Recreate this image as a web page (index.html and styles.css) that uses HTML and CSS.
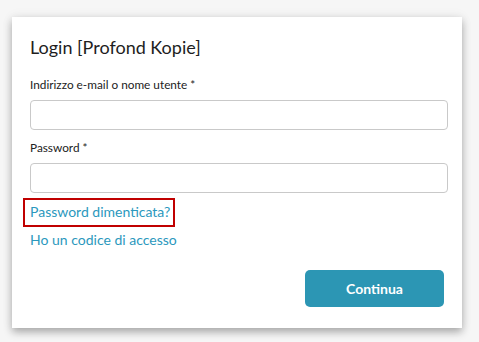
FILE: index.html
```html
<!DOCTYPE html>
<html lang="it">
<head>
<meta charset="utf-8">
<title>Login</title>
<link rel="stylesheet" href="styles.css">
</head>
<body>
<div class="card">
  <h1 class="title">Login [Profond Kopie]</h1>
  <label class="label" for="user">Indirizzo e-mail o nome utente *</label>
  <input class="field" id="user" type="text">
  <label class="label" for="pwd">Password *</label>
  <input class="field" id="pwd" type="password">
  <div class="links">
    <a class="link boxed" href="#">Password dimenticata?</a>
    <a class="link" href="#">Ho un codice di accesso</a>
  </div>
  <div class="actions">
    <button class="btn" type="button">Continua</button>
  </div>
</div>
</body>
</html>
```
FILE: styles.css
```css
html, body {
  margin: 0;
  padding: 0;
}
body {
  background: #f6f6f6;
  font-family: Lato, "Open Sans", sans-serif;
  color: #222;
  padding: 17px 0 0 12px;
  height: 342px;
  box-sizing: border-box;
}
.card {
  width: 450px;
  height: 311px;
  box-sizing: border-box;
  background: #fff;
  box-shadow: 0 4px 8px rgba(0,0,0,0.3), 0 0 12px rgba(0,0,0,0.06);
  padding: 18px 14px 0 18px;
  display: flex;
  flex-direction: column;
}
.title {
  margin: 0;
  font-size: 18px;
  font-weight: 400;
  line-height: 24px;
  color: #1e1e1e;
}
.label {
  display: block;
  font-size: 11.8px;
  line-height: 14px;
  margin-top: 19px;
  color: #222;
}
.label + .field {
  margin-top: 8px;
}
.field {
  display: block;
  width: 418px;
  height: 30px;
  box-sizing: border-box;
  border: 1px solid #c9c9c9;
  border-radius: 4px;
  margin: 0;
  padding: 0 8px;
  font: inherit;
}
.field + .label {
  margin-top: 11px;
}
.links {
  display: flex;
  flex-direction: column;
  align-items: flex-start;
  margin-top: 7px;
}
.link {
  font-size: 14px;
  line-height: 18px;
  color: #2b98bd;
  text-decoration: none;
}
.boxed {
  outline: 2px solid #c00000;
  outline-offset: 0;
  padding: 3px 3px 4px 5px;
  margin-left: -5px;
  line-height: 18px;
}
.boxed + .link {
  margin-top: 6px;
}
.actions {
  display: flex;
  justify-content: flex-end;
  margin-top: 21px;
  padding-right: 4px;
}
.btn {
  width: 139px;
  height: 37px;
  border: 0;
  border-radius: 5px;
  background: #2c96b4;
  color: #fff;
  font-family: Lato, sans-serif;
  font-weight: 700;
  font-size: 14px;
  cursor: pointer;
}
```
